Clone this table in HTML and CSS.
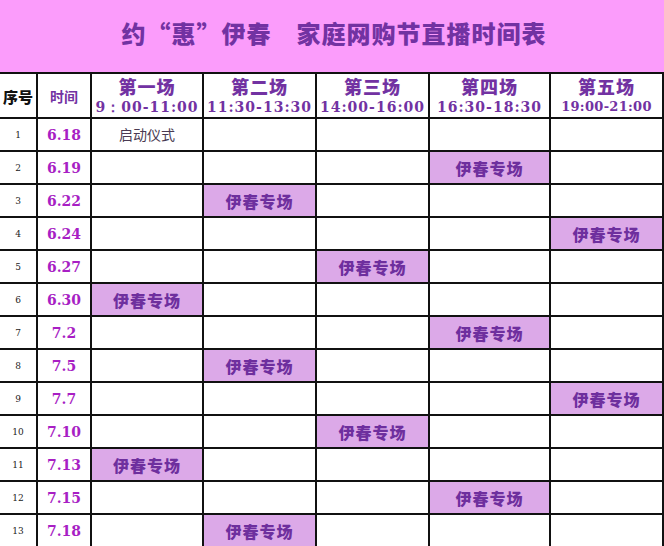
FILE: index.html
```html
<!DOCTYPE html>
<html lang="zh">
<head>
<meta charset="utf-8">
<link rel="stylesheet" href="styles.css">
</head>
<body>
<div class="page">
  <header class="banner"><h1 class="title">约“惠”伊春　家庭网购节直播时间表</h1></header>
  <div class="grid">
    <div class="cell hd"><span class="hd-no">序号</span></div>
    <div class="cell hd"><span class="hd-time">时间</span></div>
    <div class="cell hd"><span class="hd-name">第一场</span><span class="hd-range">9：00-11:00</span></div>
    <div class="cell hd"><span class="hd-name">第二场</span><span class="hd-range">11:30-13:30</span></div>
    <div class="cell hd"><span class="hd-name">第三场</span><span class="hd-range">14:00-16:00</span></div>
    <div class="cell hd"><span class="hd-name">第四场</span><span class="hd-range">16:30-18:30</span></div>
    <div class="cell hd"><span class="hd-name">第五场</span><span class="hd-range small">19:00-21:00</span></div>

    <div class="cell no">1</div><div class="cell date">6.18</div><div class="cell"><span class="plain">启动仪式</span></div><div class="cell"></div><div class="cell"></div><div class="cell"></div><div class="cell"></div>
    <div class="cell no">2</div><div class="cell date">6.19</div><div class="cell"></div><div class="cell"></div><div class="cell"></div><div class="cell on">伊春专场</div><div class="cell"></div>
    <div class="cell no">3</div><div class="cell date">6.22</div><div class="cell"></div><div class="cell on">伊春专场</div><div class="cell"></div><div class="cell"></div><div class="cell"></div>
    <div class="cell no">4</div><div class="cell date">6.24</div><div class="cell"></div><div class="cell"></div><div class="cell"></div><div class="cell"></div><div class="cell on">伊春专场</div>
    <div class="cell no">5</div><div class="cell date">6.27</div><div class="cell"></div><div class="cell"></div><div class="cell on">伊春专场</div><div class="cell"></div><div class="cell"></div>
    <div class="cell no">6</div><div class="cell date">6.30</div><div class="cell on">伊春专场</div><div class="cell"></div><div class="cell"></div><div class="cell"></div><div class="cell"></div>
    <div class="cell no">7</div><div class="cell date">7.2</div><div class="cell"></div><div class="cell"></div><div class="cell"></div><div class="cell on">伊春专场</div><div class="cell"></div>
    <div class="cell no">8</div><div class="cell date">7.5</div><div class="cell"></div><div class="cell on">伊春专场</div><div class="cell"></div><div class="cell"></div><div class="cell"></div>
    <div class="cell no">9</div><div class="cell date">7.7</div><div class="cell"></div><div class="cell"></div><div class="cell"></div><div class="cell"></div><div class="cell on">伊春专场</div>
    <div class="cell no">10</div><div class="cell date">7.10</div><div class="cell"></div><div class="cell"></div><div class="cell on">伊春专场</div><div class="cell"></div><div class="cell"></div>
    <div class="cell no">11</div><div class="cell date">7.13</div><div class="cell on">伊春专场</div><div class="cell"></div><div class="cell"></div><div class="cell"></div><div class="cell"></div>
    <div class="cell no">12</div><div class="cell date">7.15</div><div class="cell"></div><div class="cell"></div><div class="cell"></div><div class="cell on">伊春专场</div><div class="cell"></div>
    <div class="cell no">13</div><div class="cell date">7.18</div><div class="cell"></div><div class="cell on">伊春专场</div><div class="cell"></div><div class="cell"></div><div class="cell"></div>
  </div>
</div>
</body>
</html>
```

FILE: styles.css
```css
* { box-sizing: border-box; }
html, body { margin: 0; padding: 0; background: #ffffff; }
.page { width: 664px; height: 546px; overflow: hidden; }
.banner {
  height: 72px;
  background: #fb9cfb;
  display: flex;
  align-items: center;
  justify-content: center;
  padding-bottom: 6px;
}
.title {
  margin: 0;
  font-family: "Noto Sans CJK SC", sans-serif;
  font-weight: 900;
  font-size: 24px;
  line-height: 30px;
  color: #7232a2;
  letter-spacing: 1px;
  padding-left: 4px;
}
.grid {
  display: grid;
  grid-template-columns: 38px 54px 112px 113px 113px 121px 113px;
  grid-template-rows: 45px repeat(13, 33px);
  border-top: 2px solid #111;
}
.cell {
  border-right: 2px solid #111;
  border-bottom: 2px solid #111;
  display: flex;
  align-items: center;
  justify-content: center;
  background: #ffffff;
}
.hd { flex-direction: column; padding-top: 1px; }
.hd-no {
  font-family: "Noto Sans CJK SC", sans-serif;
  font-weight: 900;
  font-size: 15px;
  color: #111;
}
.hd-time {
  font-family: "Noto Sans CJK SC", sans-serif;
  font-weight: 700;
  font-size: 14px;
  color: #7232a2;
}
.hd-name {
  font-family: "Noto Sans CJK SC", sans-serif;
  font-weight: 900;
  font-size: 18px;
  line-height: 21px;
  color: #7232a2;
  letter-spacing: 1px;
}
.hd-range {
  font-family: "DejaVu Serif", serif;
  font-weight: 700;
  font-size: 14px;
  line-height: 20px;
  color: #7232a2;
  white-space: nowrap;
  letter-spacing: 1px;
}
.hd-range.small { font-size: 13px; letter-spacing: 0.3px; }
.no {
  font-family: "DejaVu Serif", serif;
  font-size: 9px;
  color: #222;
}
.date {
  font-family: "DejaVu Serif", serif;
  font-weight: 700;
  font-size: 14px;
  color: #a81fc4;
}
.plain {
  font-family: "Noto Sans CJK SC", sans-serif;
  font-size: 14px;
  color: #4a3a52;
  margin-bottom: 2px;
}
.on {
  background: #dca9e8;
  font-family: "Noto Sans CJK SC", sans-serif;
  font-weight: 900;
  font-size: 16px;
  color: #6e2f9e;
  letter-spacing: 1px;
}
```
